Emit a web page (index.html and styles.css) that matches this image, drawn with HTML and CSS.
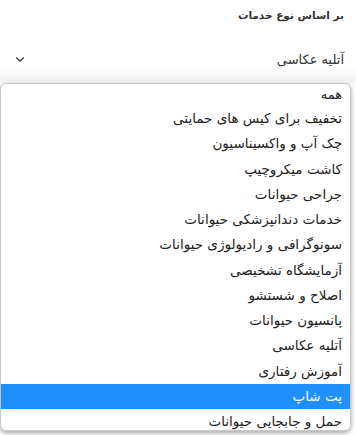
FILE: index.html
```html
<!DOCTYPE html>
<html lang="fa" dir="rtl">
<head>
    <meta charset="UTF-8">
    <meta name="viewport" content="width=device-width, initial-scale=1.0">
    <title>فیلتر خدمات</title>
    <link rel="stylesheet" href="styles.css">
</head>
<body>
    <div class="filter">
        <div class="filter-label">بر اساس نوع خدمات</div>
        <div class="select-box">
            <span class="select-value">آتلیه عکاسی</span>
            <svg class="chevron" width="10" height="7" viewBox="0 0 10 7">
                <path d="M1.5 1.8 L5 5 L8.5 1.8" fill="none" stroke="#333" stroke-width="1.2" stroke-linecap="round" stroke-linejoin="round"/>
            </svg>
        </div>
        <ul class="options">
            <li class="option first">همه</li>
            <li class="option">تخفیف برای کیس های حمایتی</li>
            <li class="option">چک آپ و واکسیناسیون</li>
            <li class="option">کاشت میکروچیپ</li>
            <li class="option">جراحی حیوانات</li>
            <li class="option">خدمات دندانپزشکی حیوانات</li>
            <li class="option">سونوگرافی و رادیولوژی حیوانات</li>
            <li class="option">آزمایشگاه تشخیصی</li>
            <li class="option">اصلاح و شستشو</li>
            <li class="option">پانسیون حیوانات</li>
            <li class="option">آتلیه عکاسی</li>
            <li class="option">آموزش رفتاری</li>
            <li class="option active">پت شاپ</li>
            <li class="option">حمل و جابجایی حیوانات</li>
        </ul>
    </div>
</body>
</html>
```

FILE: styles.css
```css
body {
    margin: 0;
    padding: 0;
    background-color: #fff;
    font-family: 'DejaVu Sans', sans-serif;
    color: #333;
    overflow: hidden;
}
.filter {
    display: flex;
    flex-direction: column;
    height: 435px;
}
.filter-label {
    padding: 9px 12px 0 0;
    height: 29px;
    font-size: 10.5px;
    font-weight: bold;
    color: #333;
}
.select-box {
    display: flex;
    align-items: center;
    justify-content: space-between;
    height: 42px;
    padding: 0 12px 0 15px;
    background: linear-gradient(#fff 70%, #f3f3f3);
    box-shadow: 0 3px 4px rgba(0, 0, 0, 0.06);
}
.select-value {
    font-size: 13px;
    color: #333;
}
.options {
    list-style: none;
    margin: 3px 5px 0 0;
    padding: 0;
    height: 346px;
    overflow: hidden;
    border: 1px solid #c8c8c8;
    border-radius: 6px;
    background-color: #fff;
    box-shadow: 0 2px 5px rgba(0, 0, 0, 0.35);
}
.option {
    height: 25.27px;
    line-height: 25px;
    padding-right: 8px;
    font-size: 13.5px;
    color: #222;
    white-space: nowrap;
}
.option.first {
    height: 22px;
    line-height: 21px;
    font-size: 13px;
}
.option.active {
    background-color: #1e90ff;
    color: #fff;
}
```
